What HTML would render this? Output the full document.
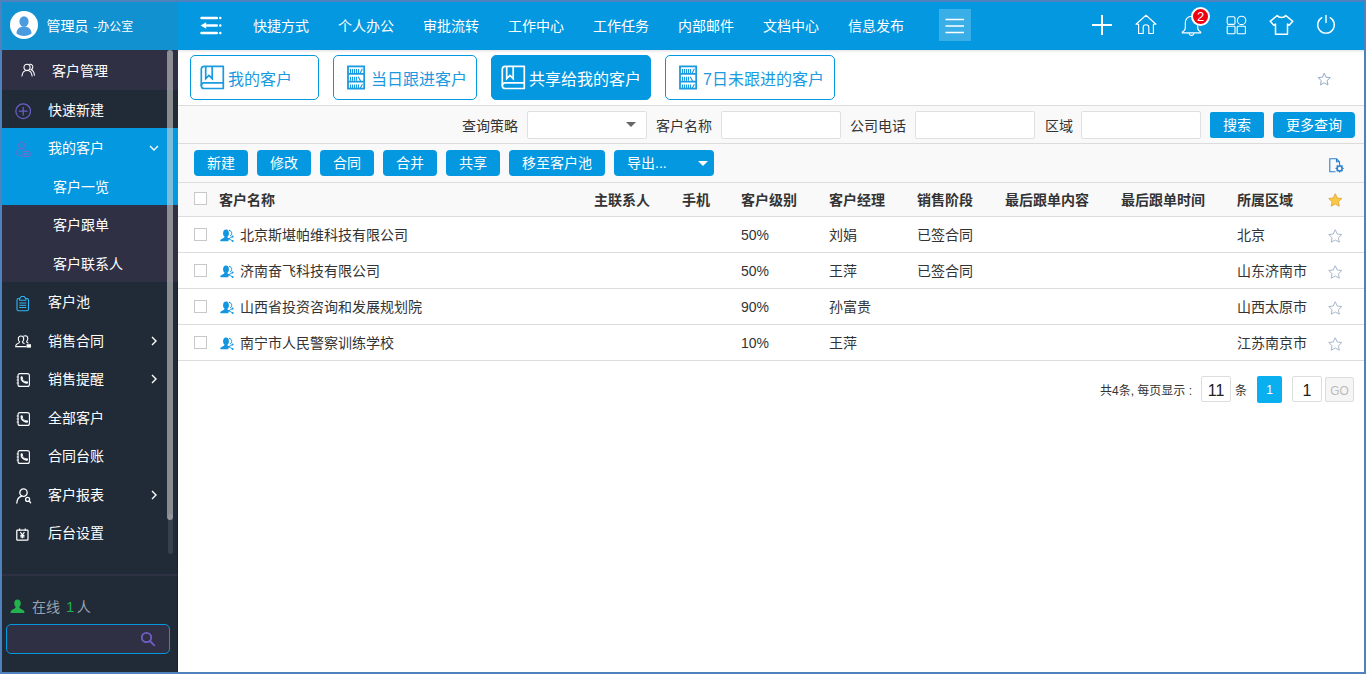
<!DOCTYPE html>
<html lang="zh-CN">
<head>
<meta charset="utf-8">
<title>客户管理</title>
<style>
*{box-sizing:border-box;margin:0;padding:0}
html,body{width:1367px;height:674px;overflow:hidden;background:#fff}
body{font-family:"Liberation Sans","Noto Sans CJK SC",sans-serif;font-size:14px;color:#333;position:relative}
.abs{position:absolute}
#frame{position:absolute;left:0;top:0;width:1366px;height:674px;border:2px solid #4f81bd;z-index:50;pointer-events:none}
/* sidebar */
#side{position:absolute;left:2px;top:2px;width:176px;height:670px;background:#212a37;overflow:hidden}
#side .hd{position:absolute;left:0;top:0;width:176px;height:48px;background:#1191d0}
#side .hd .nm{position:absolute;left:44.500px;top:13px;font-size:14px;line-height:22px;color:#fff;white-space:nowrap}
.mi{position:absolute;left:0;width:176px;color:#fff;font-size:14px;white-space:nowrap}
.mi span{position:absolute;top:0;line-height:22px}
.mi svg{position:absolute}
/* topbar */
#top{position:absolute;left:178px;top:2px;width:1186px;height:48px;background:#0398e0}
#top .nav{position:absolute;top:13px;font-size:14px;line-height:22px;color:#fff;white-space:nowrap}
/* main */
#main{position:absolute;left:178px;top:50px;width:1186px;height:622px;background:#fff}
.tab{position:absolute;top:5px;height:45px;border:1px solid #0398e0;border-radius:5px;color:#1a9ae0;font-size:16px;white-space:nowrap;background:#fff}
.tab.on{background:#0398e0;color:#fff}
.tab span{position:absolute;top:11px;line-height:25px}
.tab svg{position:absolute}
.hl{position:absolute;left:0;width:1186px;height:1px;background:#dcdcdc}
.lbl{position:absolute;font-size:14px;line-height:20px;color:#333;white-space:nowrap}
.inp{position:absolute;top:60px;width:120px;height:29px;border:1px solid #e0e0e0;background:#fff;border-radius:2px}
.btn{position:absolute;height:26px;background:#0398e0;color:#fff;border-radius:4px;font-size:14px;line-height:26px;text-align:center;white-space:nowrap}
.th{position:absolute;top:140px;font-weight:bold;font-size:14px;line-height:20px;color:#333;white-space:nowrap}
.td{position:absolute;font-size:14px;line-height:20px;color:#333;white-space:nowrap}
.cb{position:absolute;left:16px;width:13px;height:13px;border:1px solid #c8c8c8;background:#fff}
</style>
</head>
<body>
<div id="side">
  <div class="hd">
    <svg class="abs" style="left:8px;top:9px" width="28" height="28" viewBox="0 0 28 28"><circle cx="14" cy="14" r="14" fill="#fff"/><ellipse cx="14" cy="10.5" rx="4.6" ry="5.2" fill="#4a9ae0"/><path d="M6.5 22.5c0-4.6 3.4-7 7.5-7s7.500 2.400 7.500 7c-2 1.600-4.600 2.400-7.500 2.400s-5.500-.8-7.500-2.400z" fill="#4a9ae0"/></svg>
    <div class="nm">管理员<span style="font-size:12px;margin-left:1.500px"> -办公室</span></div>
  </div>
  
  <div class="abs" style="left:0;top:48px;width:176px;height:40px;background:#2f3044"></div>
  <div class="abs" style="left:0;top:126px;width:176px;height:77px;background:#0398e0"></div>
  <div class="abs" style="left:0;top:203px;width:176px;height:77px;background:#2f3044"></div>
  <div class="abs" style="left:0;top:572px;width:176px;height:2px;background:#2f3044"></div>

  <div class="mi" style="top:58px"><svg style="left:19px;top:2.500px" width="14.500" height="14" viewBox="0 0 15 15" fill="none" stroke="#fff" stroke-width="1.150" stroke-linecap="round"><circle cx="6.2" cy="4.600" r="3.300"/><path d="M.8 14c.3-4 2.400-6 5.400-6s5.100 2 5.400 6"/><path d="M9 1.400c2.400-.4 4 1.800 3.200 4-.3.900-.9 1.500-1.600 1.900 2 .8 3.300 2.900 3.500 5.900"/></svg><span style="left:50px">客户管理</span></div>
  <div class="mi" style="top:97px"><svg style="left:12.700px;top:4.200px" width="16.400" height="16.400" viewBox="0 0 17 17" fill="none" stroke="#6a5fc4" stroke-width="1.3" stroke-linecap="round"><circle cx="8.500" cy="8.500" r="7.600"/><path d="M8.500 4.500v8M4.500 8.500h8"/></svg><span style="left:46px">快速新建</span></div>
  <div class="mi" style="top:135px"><svg style="left:13px;top:3px" width="17" height="18" viewBox="0 0 17 18" fill="none" stroke="#6b6ecb" stroke-width="1"><circle cx="6.600" cy="5.200" r="3.200"/><path d="M6.800 15.500H3c-.8 0-1.300-.5-1.300-1.300v-2c0-1.900 1.400-3.200 3.300-3.200h3.200c1.300 0 2.300.6 2.900 1.600"/><rect x="7" y="11.500" width="8.200" height="5" rx=".9"/><rect x="8.600" y="12.900" width="5" height="2.300" fill="#4a80d2" stroke="none"/></svg><span style="left:46px">我的客户</span><svg style="left:147.300px;top:8px" width="10" height="7" viewBox="0 0 10 7" fill="none" stroke="#fff" stroke-width="1.400"><path d="M1 1l4 4 4-4"/></svg></div>
  <div class="mi" style="top:174px"><span style="left:51px">客户一览</span></div>
  <div class="mi" style="top:212px"><span style="left:51px">客户跟单</span></div>
  <div class="mi" style="top:251px"><span style="left:51px">客户联系人</span></div>
  <div class="mi" style="top:289px"><svg style="left:14px;top:4px" width="14" height="17" viewBox="0 0 14 17" fill="none" stroke="#30b4f2" stroke-width="1.100" stroke-linejoin="round"><path d="M3.600 3.500H2.500C1.700 3.500 1 4.200 1 5v9.200c0 .8.700 1.500 1.500 1.500h8.500c.8 0 1.500-.7 1.500-1.500V5c0-.8-.7-1.500-1.500-1.500H9.900"/><path d="M3.600 5.200V3.700L5.300 1.500h2.900L9.900 3.700v1.500z"/><path d="M3.300 8h7M3.300 10.300h7M3.300 12.500h7" stroke-width="1"/></svg><span style="left:46px">客户池</span></div>
  <div class="mi" style="top:328px"><svg style="left:13px;top:5px" width="17" height="13.600" viewBox="0 0 17 14" preserveAspectRatio="none" fill="none" stroke="#fff" stroke-width="1.100"><path d="M6 1C4.300 1 3.300 2.300 3.300 4c0 1.200.5 2.300 1.300 3-.2 1.200-1.300 1.700-2.600 2.300-.9.400-1.300 1.200-1.300 2.700h10.600"/><path d="M6 1c1.700 0 2.700 1.300 2.700 3 0 1.200-.5 2.300-1.300 3 .2 1 1 1.500 2.100 2"/><path d="M8.500 1.300C9 .9 9.600.7 10.200.7c1.600 0 2.600 1.300 2.600 3 0 1.200-.4 2.200-1.200 2.900.1.900.8 1.400 1.800 1.900"/><rect x="11.500" y="9.500" width="4.500" height="3.500" fill="#fff" stroke="none"/></svg><span style="left:46px">销售合同</span><svg style="left:149px;top:6px" width="7" height="10" viewBox="0 0 7 10" fill="none" stroke="#fff" stroke-width="1.400"><path d="M1 1l4 4-4 4"/></svg></div>
  <div class="mi" style="top:366px"><svg class="pb" style="left:14px;top:5px" width="14" height="14" viewBox="0 0 14 14" fill="none" stroke="#fff" stroke-width="1.100"><rect x="2" y=".6" width="11.400" height="12.800" rx="2"/><path d="M.6 4h2.200M.6 7h2.200M.6 10h2.200" stroke-width=".9"/><path d="M5.700 4.300C5.300 7 8 9.900 10.900 9.500" stroke-width="2.300" stroke-linecap="round"/><path d="M6.600 6.200c.6 1 1.300 1.600 2.200 2" stroke="#212a37" stroke-width=".7"/></svg><span style="left:46px">销售提醒</span><svg style="left:149px;top:6px" width="7" height="10" viewBox="0 0 7 10" fill="none" stroke="#fff" stroke-width="1.400"><path d="M1 1l4 4-4 4"/></svg></div>
  <div class="mi" style="top:405px"><svg style="left:14px;top:5px" width="14" height="14" viewBox="0 0 14 14" fill="none" stroke="#fff" stroke-width="1.100"><rect x="2" y=".6" width="11.400" height="12.800" rx="2"/><path d="M.6 4h2.200M.6 7h2.200M.6 10h2.200" stroke-width=".9"/><path d="M5.700 4.300C5.300 7 8 9.900 10.900 9.500" stroke-width="2.300" stroke-linecap="round"/><path d="M6.600 6.200c.6 1 1.300 1.600 2.200 2" stroke="#212a37" stroke-width=".7"/></svg><span style="left:46px">全部客户</span></div>
  <div class="mi" style="top:443px"><svg style="left:14px;top:5px" width="14" height="14" viewBox="0 0 14 14" fill="none" stroke="#fff" stroke-width="1.100"><rect x="2" y=".6" width="11.400" height="12.800" rx="2"/><path d="M.6 4h2.200M.6 7h2.200M.6 10h2.200" stroke-width=".9"/><path d="M5.700 4.300C5.300 7 8 9.900 10.900 9.500" stroke-width="2.300" stroke-linecap="round"/><path d="M6.600 6.200c.6 1 1.300 1.600 2.200 2" stroke="#212a37" stroke-width=".7"/></svg><span style="left:46px">合同台账</span></div>
  <div class="mi" style="top:482px"><svg style="left:14px;top:3.500px" width="16" height="16" viewBox="0 0 16 16" fill="none" stroke="#fff" stroke-width="1.300" stroke-linecap="round"><circle cx="7.500" cy="4.600" r="3.700"/><path d="M.8 15c.3-3.700 2-6 4.600-6.600"/><circle cx="11.600" cy="11.400" r="2"/><path d="M13.100 13l1.500 1.700"/></svg><span style="left:46px">客户报表</span><svg style="left:149px;top:6px" width="7" height="10" viewBox="0 0 7 10" fill="none" stroke="#fff" stroke-width="1.400"><path d="M1 1l4 4-4 4"/></svg></div>
  <div class="mi" style="top:520px"><svg style="left:14.300px;top:6.300px" width="12.800" height="13" viewBox="0 0 13 13" fill="none" stroke="#fff" stroke-width="1.250"><rect x=".8" y="2" width="11.400" height="10.200" rx=".7"/><path d="M3.600.3v2.400M9.400.3v2.400" /><path d="M4.400 4.200l2.100 2.600 2.100-2.600M6.500 6.800v3.600M4.400 7.400h4.200M4.400 9h4.200" stroke-width="1.250"/></svg><span style="left:46px">后台设置</span></div>

  <div class="abs" style="left:165.500px;top:512px;width:5px;height:40px;background:#39404d;border-radius:3px"></div>
  <div class="abs" style="left:165px;top:48px;width:6px;height:470px;background:rgba(214,214,214,.57);border-radius:3px"></div>

  <div class="abs" style="left:175px;top:280px;width:1px;height:390px;background:rgba(0,0,0,.22)"></div>
  <svg class="abs" style="left:8px;top:597px" width="15" height="15" viewBox="0 0 15 15" fill="#22b14c"><path d="M7.500.5c2 0 3.300 1.600 3.300 3.800 0 1.500-.6 2.800-1.500 3.600.2 1.200 1.300 1.800 2.900 2.500 1.300.6 2.300 1.600 2.300 3.600H.5c0-2 1-3 2.300-3.600 1.600-.7 2.700-1.300 2.900-2.500-.9-.8-1.500-2.100-1.500-3.600C4.200 2.100 5.500.5 7.500.5z"/></svg>
  <div class="abs" style="left:30px;top:594px;font-size:14px;line-height:22px;color:#9aa3ad;white-space:nowrap">在线 <span style="color:#22b14c;margin:0 2.500px 0 2px;font-size:15px">1</span>人</div>
  <div class="abs" style="left:4px;top:622px;width:164px;height:30px;border:1px solid #0398e0;border-radius:5px;background:#2f3044"></div>
  <svg class="abs" style="left:138px;top:629px" width="16" height="16" viewBox="0 0 16 16" fill="none" stroke="#6f5fc4" stroke-width="1.800" stroke-linecap="round"><circle cx="6.500" cy="6.500" r="4.700"/><path d="M10 10l4.300 4.300"/></svg>

</div>
<div id="top">
  <svg class="abs" style="left:22px;top:13.500px" width="22" height="19" viewBox="0 0 22 19" fill="none" stroke="#fff" stroke-width="2.500" stroke-linecap="round"><path d="M1.500 2h15.300M7 9.500h9.800M1.500 17h15.300"/><path d="M20.200 2h.1M20.200 9.500h.1M20.200 17h.1"/><path d="M6.200 6.200v6.600L.5 9.500z" fill="#fff" stroke="none"/></svg>
  <div class="nav" style="left:75px">快捷方式</div>
  <div class="nav" style="left:160px">个人办公</div>
  <div class="nav" style="left:245px">审批流转</div>
  <div class="nav" style="left:330px">工作中心</div>
  <div class="nav" style="left:415px">工作任务</div>
  <div class="nav" style="left:500px">内部邮件</div>
  <div class="nav" style="left:585px">文档中心</div>
  <div class="nav" style="left:670px">信息发布</div>
  <div class="abs" style="left:761px;top:7px;width:32px;height:32px;background:rgba(255,255,255,.22)"></div>
  <svg class="abs" style="left:767px;top:16px" width="20" height="16" viewBox="0 0 20 16" fill="none" stroke="#fff" stroke-width="1.600"><path d="M.5 1.500h18.500M.5 8h18.500M.5 14.500h18.500"/></svg>
  <svg class="abs" style="left:914px;top:13px" width="20" height="20" viewBox="0 0 20 20" fill="none" stroke="#fff" stroke-width="2"><path d="M10 0v20M0 10h20"/></svg>
  <svg class="abs" style="left:957px;top:12px" width="22" height="21" viewBox="0 0 22 21" fill="none" stroke="#fff" stroke-width="1.150" stroke-linejoin="round" stroke-linecap="round"><path d="M1 10.200L11 1.200l10 9h-2.600v9.300h-4.600v-6.200c0-1.500-1.200-2.600-2.800-2.600s-2.800 1.100-2.800 2.600v6.200H3.600v-9.300z"/></svg>
  <svg class="abs" style="left:1003px;top:13px" width="21" height="22" viewBox="0 0 21 22" fill="none" stroke="#fff" stroke-width="1.100" stroke-linejoin="round"><path d="M10.500 1.200c-3.600 0-6.200 2.800-6.200 6.400v5.200c0 1.800-1.200 3.300-3 4.300v.8h18.400v-.8c-1.800-1-3-2.500-3-4.300V7.600c0-3.600-2.600-6.400-6.200-6.400z"/><path d="M8 18c.2 1.500 1.200 2.400 2.500 2.400s2.300-.9 2.500-2.400"/></svg>
  <div class="abs" style="left:1013px;top:5px;width:19px;height:19px;border-radius:50%;background:#f0000f;border:2px solid #fff;color:#fff;font-size:13px;line-height:15px;text-align:center">2</div>
  <svg class="abs" style="left:1048px;top:13px" width="21" height="20" viewBox="0 0 21 20" fill="none" stroke="#fff" stroke-width="1.100"><rect x="1.200" y="1.800" width="7.800" height="7.600" rx="1.500"/><circle cx="15.600" cy="5.400" r="4.200"/><rect x="1.200" y="11.200" width="7.800" height="7.600" rx=".8"/><rect x="11.200" y="11.200" width="8.200" height="7.600" rx=".8"/></svg>
  <svg class="abs" style="left:1091px;top:12px" width="25" height="22" viewBox="0 0 25 22" fill="none" stroke="#fff" stroke-width="1.500" stroke-linejoin="round"><path d="M8.200 1.500c.8 1.200 2.300 2 4.300 2s3.500-.8 4.300-2l7 5.800-3.600 4-1.700-1.300v10.200H6.500V10l-1.700 1.300-3.600-4z"/></svg>
  <svg class="abs" style="left:1138px;top:12px" width="20" height="21" viewBox="0 0 20 21" fill="none" stroke="#fff" stroke-width="1.400" stroke-linecap="round"><path d="M10 1.500v7"/><path d="M5.800 3.700a8.300 8.300 0 1 0 8.400 0"/></svg>
</div>
<div id="main">
  <div class="abs" style="left:0;top:0;width:1186px;height:3px;background:linear-gradient(#e6e6e6,#fff)"></div>
  <div class="tab" style="left:12px;width:129px"><svg style="left:9px;top:9px" width="25" height="25" viewBox="0 0 25 25" fill="none" stroke="currentColor" stroke-width="1.700" stroke-linejoin="round"><path d="M4.300 1.300h19v22.200h-19c-1.700 0-3-1.200-3-2.800V4.300c0-1.700 1.300-3 3-3z"/><path d="M1.300 20.700c0-1.600 1.300-2.800 3-2.800h19"/><path d="M5.700 1.300v12.300l3.250-3.200 3.250 3.200V1.300" stroke-linejoin="miter"/></svg><span style="left:37px">我的客户</span></div>
  <div class="tab" style="left:155px;width:144px"><svg style="left:12px;top:9px" width="19" height="25" viewBox="0 0 19 25" fill="none" stroke="currentColor"><rect x="2" y="1.400" width="16.200" height="22.200" stroke-width="1.800"/><path d="M2 8.800h16.200M2 16.600h16.200" stroke-width="1.800"/><path d="M4.500 4v4M6.500 4v4M8.500 4v4M10.500 4v4M12.500 4v4M16.400 3.800l-2.200 4.200M4.500 11.800v4M6.500 11.800v4M8.500 11.800v4M10.500 11.800v4M12.200 11.800l2.400 4.200M4.500 19.500v3.500M6.500 19.500v3.500M8.500 19.500v3.500M10.500 19.500v3.500M12.500 19.500v3.500M16.400 19.200l-2.200 4" stroke-width="1.150"/></svg><span style="left:37px">当日跟进客户</span></div>
  <div class="tab on" style="left:313px;width:160px"><svg style="left:9px;top:9px" width="25" height="25" viewBox="0 0 25 25" fill="none" stroke="currentColor" stroke-width="1.700" stroke-linejoin="round"><path d="M4.300 1.300h19v22.200h-19c-1.700 0-3-1.200-3-2.800V4.300c0-1.700 1.300-3 3-3z"/><path d="M1.300 20.700c0-1.600 1.300-2.800 3-2.800h19"/><path d="M5.700 1.300v12.300l3.250-3.200 3.250 3.200V1.300" stroke-linejoin="miter"/></svg><span style="left:37px">共享给我的客户</span></div>
  <div class="tab" style="left:487px;width:170px"><svg style="left:12px;top:9px" width="19" height="25" viewBox="0 0 19 25" fill="none" stroke="currentColor"><rect x="2" y="1.400" width="16.200" height="22.200" stroke-width="1.800"/><path d="M2 8.800h16.200M2 16.600h16.200" stroke-width="1.800"/><path d="M4.500 4v4M6.500 4v4M8.500 4v4M10.500 4v4M12.500 4v4M16.400 3.800l-2.200 4.200M4.500 11.800v4M6.500 11.800v4M8.500 11.800v4M10.500 11.800v4M12.200 11.800l2.400 4.200M4.500 19.500v3.500M6.500 19.500v3.500M8.500 19.500v3.500M10.500 19.500v3.500M12.500 19.500v3.500M16.400 19.200l-2.200 4" stroke-width="1.150"/></svg><span style="left:37px">7日未跟进的客户</span></div>
  <svg class="abs" style="left:1138.800px;top:22.100px" width="14.400" height="14.400" viewBox="0 0 16 16" fill="none" stroke="#8fa6c2" stroke-width="1.050"><path d="M8 1.300l2 4.500 4.800.5-3.600 3.300 1 4.800L8 12l-4.200 2.400 1-4.800L1.200 6.300 6 5.800z"/></svg>
  <div class="hl" style="top:55px"></div>
  <div class="abs" style="left:0;top:56px;width:1186px;height:110px;background:#f9f9f9"></div>
  <div class="hl" style="top:93px"></div>
  <div class="hl" style="top:132px"></div>
  <div class="hl" style="top:166px"></div>
  <div class="hl" style="top:202px"></div>
  <div class="hl" style="top:238px"></div>
  <div class="hl" style="top:274px"></div>
  <div class="hl" style="top:310px"></div>
  <div class="abs" style="left:0;top:167px;width:1186px;height:35px;background:#fff"></div>
  <div class="lbl" style="left:284px;top:66px">查询策略</div>
  <div class="lbl" style="left:478px;top:66px">客户名称</div>
  <div class="lbl" style="left:672px;top:66px">公司电话</div>
  <div class="lbl" style="left:867px;top:66px">区域</div>
  <div class="inp" style="left:349px;top:61px;height:28px"></div>
  <div class="inp" style="left:543px;top:61px;height:28px"></div>
  <div class="inp" style="left:737px;top:61px;height:28px"></div>
  <div class="inp" style="left:903px;top:61px;height:28px"></div>
  <svg class="abs" style="left:448px;top:72px" width="10" height="5" viewBox="0 0 10 5"><path d="M0 0h10L5 5z" fill="#666"/></svg>
  <div class="btn" style="left:1032px;top:62px;width:54px;border-radius:2px">搜索</div>
  <div class="btn" style="left:1095px;top:62px;width:82px">更多查询</div>
  <div class="btn" style="left:16px;top:100px;width:54px">新建</div>
  <div class="btn" style="left:79px;top:100px;width:54px">修改</div>
  <div class="btn" style="left:142px;top:100px;width:54px">合同</div>
  <div class="btn" style="left:205px;top:100px;width:54px">合并</div>
  <div class="btn" style="left:268px;top:100px;width:54px">共享</div>
  <div class="btn" style="left:331px;top:100px;width:96px">移至客户池</div>
  <div class="btn" style="left:436px;top:100px;width:100px;text-align:left;padding-left:13px">导出...</div>
  <svg class="abs" style="left:520.200px;top:111px" width="10" height="5" viewBox="0 0 10 5"><path d="M0 0h10L5 5z" fill="#fff"/></svg>
  <svg class="abs" style="left:1151px;top:108px" width="15" height="15" viewBox="0 0 15 15" fill="none" stroke="#2a80d0" stroke-width="1.100"><path d="M6.500 13.800H.8V.8h6.700l3 3v2.400"/><path d="M7.500.8v3h3"/><circle cx="10.600" cy="10.400" r="2.500" stroke-width="1.500"/><path d="M10.600 6.300v1.600M10.600 12.900v1.600M6.500 10.400h1.600M13.100 10.400h1.600M7.700 7.500l1.100 1.100M12.400 12.200l1.100 1.100M7.700 13.300l1.100-1.100M12.400 8.600l1.100-1.100" stroke-width="1.400"/></svg>
  <div class="cb" style="left:16px;top:142px"></div>
  <div class="th" style="left:41px;top:140px">客户名称</div>
  <div class="th" style="left:416px;top:140px">主联系人</div>
  <div class="th" style="left:504px;top:140px">手机</div>
  <div class="th" style="left:563px;top:140px">客户级别</div>
  <div class="th" style="left:651px;top:140px">客户经理</div>
  <div class="th" style="left:739px;top:140px">销售阶段</div>
  <div class="th" style="left:827px;top:140px">最后跟单内容</div>
  <div class="th" style="left:943px;top:140px">最后跟单时间</div>
  <div class="th" style="left:1059px;top:140px">所属区域</div>
  <svg class="abs" style="left:1149.6px;top:143px" width="14.500" height="14.500" viewBox="0 0 16 16"><path d="M8 .8l2.200 4.700 5 .6-3.700 3.500 1 5L8 12.100l-4.500 2.500 1-5L.8 6.100l5-.6z" fill="#f9c846" stroke="#e2a030" stroke-width=".9"/></svg>
  <div class="cb" style="left:16px;top:178px"></div>
  <svg class="abs" style="left:42px;top:179px" width="14" height="13" viewBox="0 0 14 13"><ellipse cx="6" cy="4.200" rx="2.900" ry="3.800" fill="#1296e0"/><path d="M.2 12.300c0-1.700.9-2.400 2.400-2.900 1.300-.5 2-1 2-2.200h2.800c0 1 .4 1.600 1.200 2l.4.200-.8 2.900z" fill="#1296e0"/><path d="M9 1.300c1.700.2 2.700 1.500 2.700 3.100 0 1.300-.6 2.200-1.700 2.500" fill="none" stroke="#1296e0" stroke-width="1"/><path d="M12.600 7.600L8.700 9.700l3.900 2.200" fill="none" stroke="#1296e0" stroke-width=".9"/><circle cx="12.600" cy="7.600" r="1" fill="#1296e0"/><circle cx="12.600" cy="11.900" r="1" fill="#1296e0"/><circle cx="8.900" cy="9.700" r=".8" fill="#1296e0"/></svg>
  <div class="td" style="left:62px;top:175px">北京斯堪帕维科技有限公司</div>
  <div class="td" style="left:563px;top:175px">50%</div>
  <div class="td" style="left:651px;top:175px">刘娟</div>
  <div class="td" style="left:739px;top:175px">已签合同</div>
  <div class="td" style="left:1059px;top:175px">北京</div>
  <svg class="abs" style="left:1149.6px;top:179px" width="14.500" height="14.500" viewBox="0 0 16 16"><path d="M8 .8l2.200 4.700 5 .6-3.700 3.500 1 5L8 12.100l-4.500 2.500 1-5L.8 6.100l5-.6z" fill="none" stroke="#9fb0c8" stroke-width="1"/></svg>
  <div class="cb" style="left:16px;top:214px"></div>
  <svg class="abs" style="left:42px;top:215px" width="14" height="13" viewBox="0 0 14 13"><ellipse cx="6" cy="4.200" rx="2.900" ry="3.800" fill="#1296e0"/><path d="M.2 12.300c0-1.700.9-2.400 2.400-2.900 1.300-.5 2-1 2-2.200h2.800c0 1 .4 1.600 1.200 2l.4.200-.8 2.900z" fill="#1296e0"/><path d="M9 1.300c1.700.2 2.700 1.500 2.700 3.100 0 1.300-.6 2.200-1.700 2.500" fill="none" stroke="#1296e0" stroke-width="1"/><path d="M12.600 7.600L8.700 9.700l3.900 2.200" fill="none" stroke="#1296e0" stroke-width=".9"/><circle cx="12.600" cy="7.600" r="1" fill="#1296e0"/><circle cx="12.600" cy="11.900" r="1" fill="#1296e0"/><circle cx="8.900" cy="9.700" r=".8" fill="#1296e0"/></svg>
  <div class="td" style="left:62px;top:211px">济南奋飞科技有限公司</div>
  <div class="td" style="left:563px;top:211px">50%</div>
  <div class="td" style="left:651px;top:211px">王萍</div>
  <div class="td" style="left:739px;top:211px">已签合同</div>
  <div class="td" style="left:1059px;top:211px">山东济南市</div>
  <svg class="abs" style="left:1149.6px;top:215px" width="14.500" height="14.500" viewBox="0 0 16 16"><path d="M8 .8l2.200 4.700 5 .6-3.700 3.500 1 5L8 12.100l-4.500 2.500 1-5L.8 6.100l5-.6z" fill="none" stroke="#9fb0c8" stroke-width="1"/></svg>
  <div class="cb" style="left:16px;top:250px"></div>
  <svg class="abs" style="left:42px;top:251px" width="14" height="13" viewBox="0 0 14 13"><ellipse cx="6" cy="4.200" rx="2.900" ry="3.800" fill="#1296e0"/><path d="M.2 12.300c0-1.700.9-2.400 2.400-2.900 1.300-.5 2-1 2-2.200h2.800c0 1 .4 1.600 1.200 2l.4.200-.8 2.900z" fill="#1296e0"/><path d="M9 1.300c1.700.2 2.700 1.500 2.700 3.100 0 1.300-.6 2.200-1.700 2.500" fill="none" stroke="#1296e0" stroke-width="1"/><path d="M12.600 7.600L8.700 9.700l3.900 2.200" fill="none" stroke="#1296e0" stroke-width=".9"/><circle cx="12.600" cy="7.600" r="1" fill="#1296e0"/><circle cx="12.600" cy="11.900" r="1" fill="#1296e0"/><circle cx="8.900" cy="9.700" r=".8" fill="#1296e0"/></svg>
  <div class="td" style="left:62px;top:247px">山西省投资咨询和发展规划院</div>
  <div class="td" style="left:563px;top:247px">90%</div>
  <div class="td" style="left:651px;top:247px">孙富贵</div>
  <div class="td" style="left:1059px;top:247px">山西太原市</div>
  <svg class="abs" style="left:1149.6px;top:251px" width="14.500" height="14.500" viewBox="0 0 16 16"><path d="M8 .8l2.200 4.700 5 .6-3.700 3.500 1 5L8 12.100l-4.500 2.500 1-5L.8 6.100l5-.6z" fill="none" stroke="#9fb0c8" stroke-width="1"/></svg>
  <div class="cb" style="left:16px;top:286px"></div>
  <svg class="abs" style="left:42px;top:287px" width="14" height="13" viewBox="0 0 14 13"><ellipse cx="6" cy="4.200" rx="2.900" ry="3.800" fill="#1296e0"/><path d="M.2 12.300c0-1.700.9-2.400 2.400-2.900 1.300-.5 2-1 2-2.200h2.800c0 1 .4 1.600 1.200 2l.4.200-.8 2.900z" fill="#1296e0"/><path d="M9 1.300c1.700.2 2.700 1.500 2.700 3.100 0 1.300-.6 2.200-1.700 2.500" fill="none" stroke="#1296e0" stroke-width="1"/><path d="M12.600 7.600L8.700 9.700l3.900 2.200" fill="none" stroke="#1296e0" stroke-width=".9"/><circle cx="12.600" cy="7.600" r="1" fill="#1296e0"/><circle cx="12.600" cy="11.900" r="1" fill="#1296e0"/><circle cx="8.900" cy="9.700" r=".8" fill="#1296e0"/></svg>
  <div class="td" style="left:62px;top:283px">南宁市人民警察训练学校</div>
  <div class="td" style="left:563px;top:283px">10%</div>
  <div class="td" style="left:651px;top:283px">王萍</div>
  <div class="td" style="left:1059px;top:283px">江苏南京市</div>
  <svg class="abs" style="left:1149.6px;top:287px" width="14.500" height="14.500" viewBox="0 0 16 16"><path d="M8 .8l2.200 4.700 5 .6-3.700 3.500 1 5L8 12.100l-4.500 2.500 1-5L.8 6.100l5-.6z" fill="none" stroke="#9fb0c8" stroke-width="1"/></svg>
  <div class="abs" style="left:922px;top:331px;font-size:12px;line-height:20px;color:#333;white-space:nowrap">共4条, 每页显示 :</div>
  <div class="abs" style="left:1023px;top:326px;width:30px;height:26px;border:1px solid #ddd;border-radius:2px;background:#fff;font-size:16px;line-height:28px;text-align:center;color:#222">11</div>
  <div class="abs" style="left:1057px;top:331px;font-size:12px;line-height:20px;color:#333">条</div>
  <div class="abs" style="left:1079px;top:326px;width:25px;height:27px;background:#0aaff0;border-radius:2px;font-size:12px;line-height:29px;text-align:center;color:#fff">1</div>
  <div class="abs" style="left:1114px;top:326px;width:30px;height:26px;border:1px solid #ddd;border-radius:2px;background:#fff;font-size:16px;line-height:28px;text-align:center;color:#222">1</div>
  <div class="abs" style="left:1147px;top:327px;width:29px;height:25px;border:1px solid #ddd;border-radius:2px;background:#f5f5f5;font-size:12px;line-height:27px;text-align:center;color:#bbb">GO</div>
</div>
<div id="frame"></div>
</body>
</html>
